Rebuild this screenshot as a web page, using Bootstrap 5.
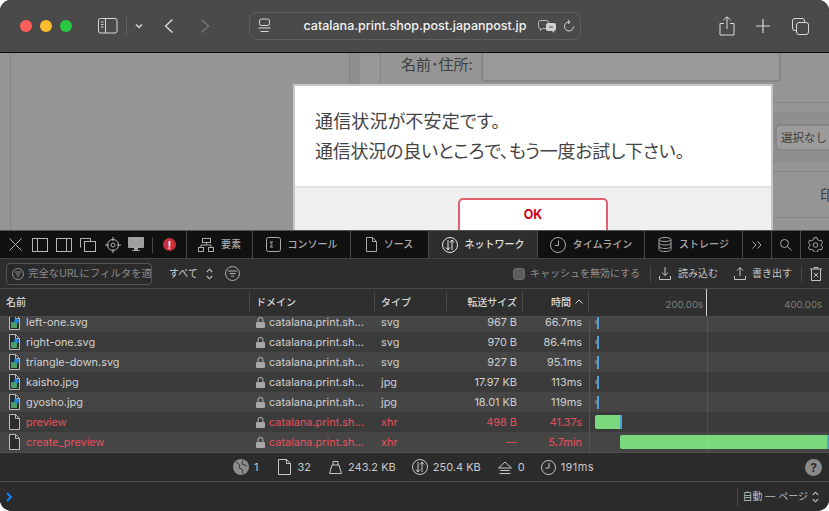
<!DOCTYPE html>
<html lang="ja">
<head>
<meta charset="utf-8">
<title>Safari Web Inspector</title>
<link href="https://cdn.jsdelivr.net/npm/bootstrap@5.3.0/dist/css/bootstrap.min.css" rel="stylesheet">
<style>
html,body{margin:0;height:511px;overflow:hidden;background:#fff}
body{font-family:Inter,"Noto Sans CJK JP",sans-serif;font-size:11px}
.win{width:829px;height:511px;border-radius:11px 11px 12px 12px;overflow:hidden;background:#2d2d2d}
svg{display:block;flex:none}
.ic{fill:none;stroke:currentColor;stroke-width:1}
.tb{height:53px;background:#4a4a4a;border-bottom:1px solid #0c0c0c;color:#d8d8d8}
.lamp{width:12px;height:12px;border-radius:50%}
.lr{background:#ff5f57}.ly{background:#febc2e}.lg{background:#28c840}
.lamps{width:52px;margin-left:20px;gap:8px}
.tsep{width:1px;height:18px;background:#626262}
.urlb{width:332px;height:28px;border:1px solid #5e5e5e;border-radius:8px;padding:0 5px 0 8px}
.urlt{color:#f2f2f2;font-size:12.5px;font-weight:500;width:268px;text-align:center;padding-left:25px;white-space:nowrap}
.pgw{height:177px;background:#959595;color:#3e3e3e;overflow:hidden;position:relative;font-family:"Noto Sans CJK JP",sans-serif}
.cl1{width:340px;margin-left:10px;border-left:1px solid #868686;border-right:1px solid #868686;flex:none}
.cl2{width:10px;background:#8e8e8e;flex:none}
.cl3{width:21px;flex:none;border-right:1px solid #868686;background:#979797}
.cl4{flex:1;min-width:0}
.fr1{height:50px;border-bottom:1px solid #868686;padding-left:20px}
.fr1 .lbl{font-size:15px;width:80px;line-height:22px}
.fbox{width:300px;height:30px;margin-top:-1px;background:#999;border:2px solid #868686;border-top:0;border-radius:0 0 4px 4px}
.fr2{height:9px}
.fr3{height:51px;background:#8f8f8f;padding-left:394px}
.slct{height:27px;width:70px;flex:none;background:#9b9b9b;border:2px solid #868686;border-radius:5px;font-size:11.5px;padding-left:4px;white-space:nowrap}
.fr4{height:9px;border-bottom:1px solid #868686}
.fr5{height:46px;border-bottom:1px solid #868686;padding-left:439px;font-size:14px;white-space:nowrap}
.dlg{position:absolute;left:293px;top:31px;width:480px;height:170px;background:#fff;border:2px solid #c6c6c6;border-bottom:0}
.dmsg{height:100px;padding:19px 20px 0 20px;font-size:18px;line-height:30px;color:#444;font-feature-settings:"palt" 1;white-space:nowrap}
.tight{letter-spacing:-.23px}
.wide{letter-spacing:.15px}
.dfoot{background:#f0f0f0;border-top:2px solid #e2e2e2;height:70px;padding-top:10px}
.okb{width:150px;height:36px;background:#fff;border:2px solid #e0606e;border-radius:5px;color:#d0021b;font-weight:700;font-size:12.5px;font-family:Inter,sans-serif;padding:0 0 2px}
.dt{height:281px;background:#2d2d2d}
.tabs{height:29px;background:#111;border-top:1px solid #555;border-bottom:1px solid #444;color:#aaa;font-size:10px;font-weight:500}
.tabi{padding:0;flex:none;height:100%;justify-content:center;border-left:1px solid #4a4a4a;gap:7px;white-space:nowrap}
.tabi.on{background:#2e2e2e;color:#e6e6e6}
.tlead{width:186px;flex:none;padding-left:9px}
.flt{height:30px;background:#2d2d2d;border-bottom:1px solid #4a4a4a;color:#c4c4c4;font-size:10px;padding-left:6px}
.fin{width:146px;height:22px;border:1px solid #555;border-radius:4px;background:#2a2a2a;color:#8c8c8c;padding-left:5px;gap:4px;overflow:hidden;white-space:nowrap;font-size:10.4px}
.fsep{width:1px;height:16px;background:#484848}
.chk{width:12px;height:12px;background:#5e5e5e;border-radius:3px;border:1px solid #6a6a6a}
.fdim{color:#8e8e8e}
.gridr{display:grid;grid-template-columns:250px 125px 72px 76px 66px 240px}
.hdr{height:28px;background:#2f2f2f;border-bottom:1px solid #4c4c4c;color:#d6d6d6;font-size:10px;font-weight:500}
.hc{padding-left:6px;position:relative;border-right:1px solid #4c4c4c;height:19px;line-height:20px;margin-top:3px}
.hc.r{text-align:right;padding:0 5px 0 0}
.hlast{height:27px;margin:0;color:#7c7c7c;font-size:9.6px;font-weight:400}
.tk{width:118px;height:27px;text-align:right;padding-right:3px;line-height:31px;border-right:1px solid #d0d0d0;flex:none}
.tk2{width:122px;height:27px;text-align:right;padding-right:7px;line-height:31px;flex:none}
.rows{height:135px;overflow:hidden;position:relative;justify-content:flex-end;background:#3a3a3a}
.rw{height:20px;flex:none;color:#cfcfcf;font-size:10.9px;line-height:20px;white-space:nowrap}
.rw:nth-child(odd){background:#454545}
.rw:nth-child(even){background:#3b3b3b}
.rw.err{color:#e5505c}
.cn{padding-left:9px;gap:6px}
.cd{padding-left:6px;gap:4px}
.cd svg{color:#a8a8a8}
.cy{padding-left:6px}
.cs{text-align:right;padding-right:6px}
.ct{text-align:right;padding-right:7px}
.tl{border-left:1px solid #555;position:relative;padding-left:5px;height:20px}
.dot{width:3px;height:4px;border-radius:50%;background:#7a7a7a;flex:none;margin-right:-1px}
.blu{width:2px;height:13px;background:#4aa3d8;flex:none}
.grn{height:14px;background:#79d97c;border-radius:2px 0 0 2px;flex:none}
.mark2{position:absolute;left:707px;top:0;bottom:0;width:1px;background:rgba(255,255,255,.09)}
.sumb{height:30px;background:#2b2b2b;border-top:1px solid #4f4f4f;border-bottom:1px solid #4f4f4f;color:#c8c8c8;font-size:11px;position:relative}
.si{position:absolute;left:233px;top:0;height:100%;width:380px}
.helpq{position:absolute;right:7px;top:6px;width:17px;height:17px;border-radius:50%;background:#8a8a8a;color:#2b2b2b;font-weight:700;font-size:12px;line-height:17px;text-align:center}
.cons{height:29px;background:#2b2b2b;color:#bdbdbd;font-size:10px;padding-left:6px}
.csep{width:1px;height:18px;background:#474747;margin-right:5px}
</style>
</head>
<body>
<svg width="0" height="0" style="position:absolute">
<defs>
<symbol id="fimg" viewBox="0 0 11 16"><path d="M.5.5h6l4 4v11H.5z" fill="#2c2c2c" stroke="#bdbdbd"/><path d="M6.5.5v4h4" fill="none" stroke="#bdbdbd"/><rect x="2" y="8" width="6" height="6" fill="#4aa068"/><circle cx="7.5" cy="7" r="2.4" fill="#1f86e0"/></symbol>
<symbol id="fdoc" viewBox="0 0 11 16"><path d="M.5.5h6l4 4v11H.5z" fill="#2c2c2c" stroke="#bdbdbd"/><path d="M6.5.5v4h4" fill="none" stroke="#bdbdbd"/></symbol>
<symbol id="lock" viewBox="0 0 9 11"><path d="M2 5V3a2.5 2.5 0 0 1 5 0v2" fill="none" stroke="currentColor" stroke-width="1.1"/><rect y="5" width="9" height="6" rx="1" fill="currentColor"/></symbol>
<symbol id="updn" viewBox="0 0 7 12"><path d="M.8 4 3.5 1.2 6.2 4M.8 8l2.7 2.8L6.2 8" fill="none" stroke="currentColor" stroke-width="1.1"/></symbol>
</defs>
</svg>
<div class="win d-flex flex-column">
  <header class="tb d-flex align-items-center flex-none">
    <div class="lamps d-flex flex-none"><span class="lamp lr"></span><span class="lamp ly"></span><span class="lamp lg"></span></div>
    <svg class="ic me-2" style="margin-left:26px" width="20" height="16" viewBox="0 0 20 16"><rect x=".5" y=".5" width="18.5" height="14.5" rx="2"/><path d="M7.5.5v14.5M3 4h2.5M3 6.5h2.5M3 9h2.5"/></svg>
    <span class="tsep"></span>
    <svg class="ic ms-2" width="8" height="6" viewBox="0 0 8 6"><path d="M1 1.500 4 4.500 7 1.500" stroke-width="1.5"/></svg>
    <svg class="ic" style="margin-left:21px" width="10" height="16" viewBox="0 0 10 16"><path d="M8.5 1.500 1.500 8l7 6.500" stroke-width="1.400"/></svg>
    <svg class="ic" style="margin-left:26px;color:#767676" width="10" height="16" viewBox="0 0 10 16"><path d="M1.500 1.500 8.500 8l-7 6.500" stroke-width="1.400"/></svg>
    <div class="urlb d-flex align-items-center flex-none" style="margin-left:39px">
      <svg class="ic" width="13" height="16" viewBox="0 0 13 16"><rect x="1.500" y="1" width="10" height="6.500" rx="2"/><path d="M.5 10h12M2.500 13.500h8"/></svg>
      <span class="urlt">catalana.print.shop.post.japanpost.jp</span>
      <svg class="ms-1" width="19" height="13" viewBox="0 0 19 13"><path d="M2.500.5h6a2 2 0 0 1 2 2v4a2 2 0 0 1-2 2h-4l-2 2v-2a2 2 0 0 1-2-2v-4a2 2 0 0 1 2-2z" fill="none" stroke="#b8b8b8"/><path d="M10 3h6a2 2 0 0 1 2 2v4a2 2 0 0 1-2 2v2l-2-2h-4a2 2 0 0 1-2-2V5a2 2 0 0 1 2-2z" fill="#d0d0d0"/><path d="M11 7h4" stroke="#4a4a4a"/></svg>
      <svg class="ic" style="margin-left:6px" width="12" height="14" viewBox="0 0 12 14"><path d="M6 3a4.500 4.500 0 1 0 4.500 4.500"/><path d="M5 .8 7 3 5 5"/></svg>
    </div>
    <svg class="ic" style="margin-left:138px" width="16" height="20" viewBox="0 0 16 20"><path d="M8 13V1M4.500 4 8 .8 11.500 4M5 7.500H1V19h14V7.500h-4"/></svg>
    <svg class="ic" style="margin-left:21px" width="14" height="14" viewBox="0 0 14 14"><path d="M7 0v14M0 7h14" stroke-width="1.200"/></svg>
    <svg class="ic" style="margin-left:22px" width="17" height="17" viewBox="0 0 17 17"><rect x=".5" y=".5" width="12" height="12" rx="2.500"/><rect x="4.500" y="4.500" width="12" height="12" rx="2.500" fill="#4a4a4a"/></svg>
  </header>

  <main class="pgw d-flex flex-none">
    <div class="cl1"></div>
    <div class="cl2"></div>
    <div class="cl3"></div>
    <div class="cl4 d-flex flex-column">
      <div class="fr1 d-flex align-items-start"><span class="lbl">名前･住所:</span><div class="fbox"></div></div>
      <div class="fr2"></div>
      <div class="fr3 d-flex align-items-center"><div class="slct d-flex align-items-center">選択なし</div></div>
      <div class="fr4"></div>
      <div class="fr5 d-flex align-items-center">印刷</div>
    </div>
    <div class="dlg">
      <div class="dmsg"><span class="wide">通信状況が不安定です。</span><br><span class="tight">通信状況の良いところで、もう一度お試し下さい。</span></div>
      <div class="dfoot d-flex justify-content-center"><button class="okb btn" type="button">OK</button></div>
    </div>
  </main>

  <section class="dt d-flex flex-column flex-none">
    <nav class="tabs d-flex align-items-center">
      <div class="tlead d-flex align-items-center" style="color:#b4b4b4">
        <svg class="ic" width="13" height="13" viewBox="0 0 13 13"><path d="M.5.500l12 12M12.500.500l-12 12"/></svg>
        <svg class="ic" style="margin-left:10px" width="16" height="14" viewBox="0 0 16 14"><rect x=".5" y=".5" width="15" height="13"/><path d="M5.500.5v13"/></svg>
        <svg class="ic" style="margin-left:8px" width="16" height="14" viewBox="0 0 16 14"><rect x=".5" y=".5" width="15" height="13"/><path d="M10.500.5v13"/></svg>
        <svg class="ic" style="margin-left:8px" width="16" height="14" viewBox="0 0 16 14"><path d="M.5 9.500V.5h10v3"/><rect x="4.500" y="3.500" width="11" height="10"/></svg>
        <svg class="ic" style="margin-left:9px" width="16" height="16" viewBox="0 0 16 16"><circle cx="8" cy="8" r="5.500"/><circle cx="8" cy="8" r="2"/><path d="M8 0v4M8 12v4M0 8h4M12 8h4"/></svg>
        <svg style="margin-left:7px" width="16" height="15" viewBox="0 0 16 15"><rect width="16" height="11" rx="1" fill="#a0a0a0"/><path d="M6 11h4v2H6zM4 13h8v1H4z" fill="#a0a0a0"/></svg>
        <span class="fsep" style="margin-left:8px"></span>
        <span class="d-flex align-items-center justify-content-center rounded-circle" style="margin-left:10px;width:13px;height:13px;background:#c8303a;color:#fff;font-size:10px;font-weight:700;line-height:1">!</span>
      </div>
      <div class="tabi d-flex align-items-center" style="width:66px">
        <svg class="ic" width="16" height="14" viewBox="0 0 16 14"><rect x="4.500" y=".5" width="8" height="4"/><rect x=".5" y="9.500" width="5" height="4"/><rect x="10.500" y="9.500" width="5" height="4"/><path d="M8.500 4.500V7H3v2.500M8.500 7H13v2.500"/></svg><span>要素</span>
      </div>
      <div class="tabi d-flex align-items-center" style="width:98px">
        <svg class="ic" width="15" height="15" viewBox="0 0 15 15"><rect x=".5" y=".5" width="14" height="14" rx="2"/><path d="M7 5H4l2 2.500L4 10h3"/></svg><span>コンソール</span>
      </div>
      <div class="tabi d-flex align-items-center" style="width:78px">
        <svg class="ic" width="11" height="15" viewBox="0 0 11 15"><path d="M.5.500h6l4 4v10H.5zM6.500.500v4h4"/></svg><span>ソース</span>
      </div>
      <div class="tabi on d-flex align-items-center" style="width:109px">
        <svg class="ic" width="16" height="16" viewBox="0 0 16 16"><circle cx="8" cy="8" r="7.500"/><path d="M6 3v10M3.800 10.500 6 13l2-2.500M10 13V3M8 5.500 10 3l2.200 2.500"/></svg><span>ネットワーク</span>
      </div>
      <div class="tabi d-flex align-items-center" style="width:107px">
        <svg class="ic" width="16" height="16" viewBox="0 0 16 16"><circle cx="8" cy="8" r="7.500"/><path d="M8.500 3.500v5H5"/></svg><span>タイムライン</span>
      </div>
      <div class="tabi d-flex align-items-center" style="width:98px">
        <svg class="ic" width="14" height="15" viewBox="0 0 14 15"><ellipse cx="7" cy="2.500" rx="6" ry="2"/><path d="M1 2.500v10c0 1.100 2.700 2 6 2s6-.9 6-2v-10M1 6c0 1.100 2.700 2 6 2s6-.9 6-2M1 9.500c0 1.100 2.700 2 6 2s6-.9 6-2"/></svg><span>ストレージ</span>
      </div>
      <div class="tabi d-flex align-items-center" style="width:29px">
        <svg class="ic" width="10" height="8" viewBox="0 0 10 8"><path d="M.5.500 4 4 .5 7.500M5.500.500 9 4 5.500 7.500"/></svg>
      </div>
      <div class="tabi d-flex align-items-center" style="width:29px">
        <svg class="ic" width="12" height="12" viewBox="0 0 12 12"><circle cx="4.500" cy="4.500" r="4"/><path d="m7.500 7.500 4 4"/></svg>
      </div>
      <div class="tabi d-flex align-items-center" style="width:29px">
        <svg class="ic" width="15" height="15" viewBox="0 0 15 15"><path d="M6 .7h3l.5 2 1.800 1 2-.5 1.300 2.500-1.400 1.500v1.600l1.400 1.500-1.300 2.500-2-.5-1.800 1-.5 2H6l-.5-2-1.800-1-2 .5L.4 10.300l1.400-1.500V7.200L.4 5.700l1.300-2.500 2 .5 1.800-1z"/><circle cx="7.500" cy="8" r="2.300"/></svg>
      </div>
    </nav>

    <div class="flt d-flex align-items-center flex-none">
      <div class="fin d-flex align-items-center">
        <svg class="ic" style="color:#8c8c8c" width="12" height="12" viewBox="0 0 12 12"><circle cx="6" cy="6" r="5.500"/><path d="M2.800 4h6.400M3.800 6h4.400M5 8h2"/></svg>
        <span>完全なURLにフィルタを適用</span>
      </div>
      <span style="margin-left:17px;color:#cfcfcf">すべて</span>
      <svg class="ms-2" style="color:#bdbdbd" width="7" height="12"><use href="#updn"/></svg>
      <svg class="ic" style="margin-left:12px;color:#b0b0b0" width="15" height="15" viewBox="0 0 15 15"><circle cx="7.500" cy="7.500" r="7"/><path d="M3 5h9M4.500 7.500h6M6 10h3"/></svg>
      <span class="chk" style="margin-left:273px"></span>
      <span class="fdim" style="margin-left:5px">キャッシュを無効にする</span>
      <span class="fsep" style="margin-left:10px"></span>
      <svg class="ic" style="margin-left:8px" width="12" height="13" viewBox="0 0 12 13"><path d="M6 0v8.500M3 5.500l3 3 3-3M.5 9v3.500h11V9"/></svg>
      <span style="margin-left:7px">読み込む</span>
      <svg class="ic" style="margin-left:16px" width="12" height="13" viewBox="0 0 12 13"><path d="M6 9V.8M3 3.500l3-3 3 3M.5 9v3.500h11V9"/></svg>
      <span style="margin-left:6px">書き出す</span>
      <span class="fsep" style="margin-left:9px"></span>
      <svg class="ic" style="margin-left:8px" width="12" height="14" viewBox="0 0 12 14"><path d="M0 2h12M4 2V.5h4V2M1.500 2v11.500h9V2M4 6l4 4M8 6l-4 4"/></svg>
    </div>

    <div class="hdr gridr flex-none">
      <div class="hc">名前</div>
      <div class="hc">ドメイン</div>
      <div class="hc">タイプ</div>
      <div class="hc r">転送サイズ</div>
      <div class="hc r d-flex justify-content-end align-items-center gap-1">時間<svg class="ic" width="8" height="5" viewBox="0 0 8 5"><path d="M.5 4.500 4 1l3.500 3.500"/></svg></div>
      <div class="hlast d-flex"><div class="tk">200.00s</div><div class="tk2">400.00s</div></div>
    </div>

    <div class="rows d-flex flex-column flex-none">
      <div class="rw gridr"><div class="cn d-flex align-items-center"><svg width="11" height="16"><use href="#fimg"/></svg>left-one.svg</div><div class="cd d-flex align-items-center"><svg width="9" height="11"><use href="#lock"/></svg>catalana.print.sh…</div><div class="cy">svg</div><div class="cs">967 B</div><div class="ct">66.7ms</div><div class="tl d-flex align-items-center"><span class="dot"></span><span class="blu"></span></div></div>
      <div class="rw gridr"><div class="cn d-flex align-items-center"><svg width="11" height="16"><use href="#fimg"/></svg>right-one.svg</div><div class="cd d-flex align-items-center"><svg width="9" height="11"><use href="#lock"/></svg>catalana.print.sh…</div><div class="cy">svg</div><div class="cs">970 B</div><div class="ct">86.4ms</div><div class="tl d-flex align-items-center"><span class="dot"></span><span class="blu"></span></div></div>
      <div class="rw gridr"><div class="cn d-flex align-items-center"><svg width="11" height="16"><use href="#fimg"/></svg>triangle-down.svg</div><div class="cd d-flex align-items-center"><svg width="9" height="11"><use href="#lock"/></svg>catalana.print.sh…</div><div class="cy">svg</div><div class="cs">927 B</div><div class="ct">95.1ms</div><div class="tl d-flex align-items-center"><span class="dot"></span><span class="blu"></span></div></div>
      <div class="rw gridr"><div class="cn d-flex align-items-center"><svg width="11" height="16"><use href="#fimg"/></svg>kaisho.jpg</div><div class="cd d-flex align-items-center"><svg width="9" height="11"><use href="#lock"/></svg>catalana.print.sh…</div><div class="cy">jpg</div><div class="cs">17.97 KB</div><div class="ct">113ms</div><div class="tl d-flex align-items-center"><span class="dot"></span><span class="blu"></span></div></div>
      <div class="rw gridr"><div class="cn d-flex align-items-center"><svg width="11" height="16"><use href="#fimg"/></svg>gyosho.jpg</div><div class="cd d-flex align-items-center"><svg width="9" height="11"><use href="#lock"/></svg>catalana.print.sh…</div><div class="cy">jpg</div><div class="cs">18.01 KB</div><div class="ct">119ms</div><div class="tl d-flex align-items-center"><span class="dot"></span><span class="blu"></span></div></div>
      <div class="rw err gridr"><div class="cn d-flex align-items-center"><svg width="11" height="16"><use href="#fdoc"/></svg>preview</div><div class="cd d-flex align-items-center"><svg width="9" height="11"><use href="#lock"/></svg>catalana.print.sh…</div><div class="cy">xhr</div><div class="cs">498 B</div><div class="ct">41.37s</div><div class="tl d-flex align-items-center"><span class="grn" style="width:25px"></span><span class="blu" style="height:14px"></span></div></div>
      <div class="rw err gridr"><div class="cn d-flex align-items-center"><svg width="11" height="16"><use href="#fdoc"/></svg>create_preview</div><div class="cd d-flex align-items-center"><svg width="9" height="11"><use href="#lock"/></svg>catalana.print.sh…</div><div class="cy">xhr</div><div class="cs">—</div><div class="ct">5.7min</div><div class="tl d-flex align-items-center"><span class="grn" style="width:207px;margin-left:25px"></span><span class="blu" style="height:14px"></span></div></div>
      <span class="mark2"></span>
    </div>

    <div class="sumb flex-none">
      <div class="si d-flex align-items-center">
        <svg width="16" height="16" viewBox="0 0 16 16"><circle cx="8" cy="8" r="8" fill="#8c8c8c"/><path d="M3 3l4 3-1 3 3 1 1 5M10 1 9 5l5 2" fill="none" stroke="#3a3a3a"/></svg>
        <span style="margin-left:5px">1</span>
        <svg class="ic" style="margin-left:20px" width="13" height="16" viewBox="0 0 13 16"><path d="M.5.500h8l4 4v11H.5zM8.500.500v4h4"/></svg>
        <span style="margin-left:6px">32</span>
        <svg class="ic" style="margin-left:18px" width="13" height="14" viewBox="0 0 13 14"><path d="M4 5V1.500h5V5M3 5h7l2.500 8.500H.5z"/></svg>
        <span style="margin-left:6px">243.2 KB</span>
        <svg class="ic" style="margin-left:16px" width="16" height="16" viewBox="0 0 16 16"><circle cx="8" cy="8" r="7.500"/><path d="M6 3v10M3.800 10.500 6 13l2-2.500M10 13V3M8 5.500 10 3l2.200 2.500"/></svg>
        <span style="margin-left:5px">250.4 KB</span>
        <svg class="ic" style="margin-left:17px" width="14" height="13" viewBox="0 0 14 13"><path d="M.5 7 7 1l6.500 6zM2.500 9.500h9M1.500 12.500h11"/></svg>
        <span style="margin-left:6px">0</span>
        <svg class="ic" style="margin-left:16px" width="15" height="15" viewBox="0 0 15 15"><circle cx="7.500" cy="7.500" r="7"/><path d="M8 3v5H4.500"/></svg>
        <span style="margin-left:5px;letter-spacing:.4px">191ms</span>
      </div>
      <span class="helpq">?</span>
    </div>

    <div class="cons d-flex align-items-center justify-content-between flex-none">
      <svg width="7" height="10" viewBox="0 0 7 10"><path d="M1 1l4 4-4 4" fill="none" stroke="#0a84ff" stroke-width="2"/></svg>
      <div class="d-flex align-items-center" style="padding-right:10px">
        <span class="csep"></span><span>自動 — ページ</span>
        <svg style="margin-left:4px" width="7" height="12"><use href="#updn"/></svg>
      </div>
    </div>
  </section>
</div>
</body>
</html>
